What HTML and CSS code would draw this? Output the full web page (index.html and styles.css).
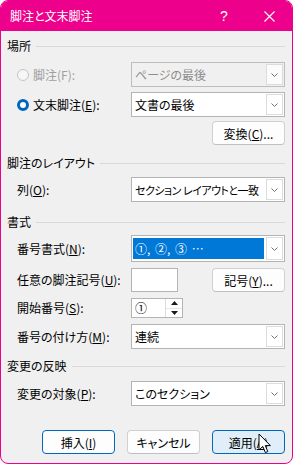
FILE: index.html
```html
<!DOCTYPE html>
<html lang="ja">
<head>
    <meta charset="UTF-8">
    <meta name="viewport" content="width=device-width, initial-scale=1.0">
    <title>脚注と文末脚注</title>
    <link rel="stylesheet" href="styles.css">
</head>
<body>
    <div class="window">
        <div class="titlebar">
            <span class="title">脚注と文末脚注</span>
            <span class="help">?</span>
            <span class="close">
                <svg width="11" height="11" viewBox="0 0 11 11"><path d="M0.5 0.5 L10.5 10.5 M10.5 0.5 L0.5 10.5" stroke="#fff" stroke-width="1.1" fill="none"/></svg>
            </span>
        </div>

        <div class="content">
            <!-- 場所 -->
            <div class="group-title g-place"><span>場所</span></div>
            <div class="row row-footnote">
                <label class="radio disabled"><span class="dot"></span><span>脚注(F):</span></label>
                <div class="select disabled">
                    <span class="value">ページの最後</span>
                    <span class="arrow"><svg width="7" height="4" viewBox="0 0 7 4"><path d="M0.5 0.5 L3.5 3.5 L6.5 0.5" stroke="#707070" fill="none"/></svg></span>
                </div>
            </div>
            <div class="row row-endnote">
                <label class="radio checked"><span class="dot"></span><span>文末脚注(<u>E</u>):</span></label>
                <div class="select">
                    <span class="value">文書の最後</span>
                    <span class="arrow"><svg width="7" height="4" viewBox="0 0 7 4"><path d="M0.5 0.5 L3.5 3.5 L6.5 0.5" stroke="#707070" fill="none"/></svg></span>
                </div>
            </div>
            <div class="row row-convert">
                <span></span>
                <button class="btn btn-right">変換(<u>C</u>)...</button>
            </div>

            <!-- 脚注のレイアウト -->
            <div class="group-title g-layout"><span>脚注のレイアウト</span></div>
            <div class="row row-columns">
                <label>列(<u>O</u>):</label>
                <div class="select">
                    <span class="value narrow">セクション レイアウトと一致</span>
                    <span class="arrow"><svg width="7" height="4" viewBox="0 0 7 4"><path d="M0.5 0.5 L3.5 3.5 L6.5 0.5" stroke="#707070" fill="none"/></svg></span>
                </div>
            </div>

            <!-- 書式 -->
            <div class="group-title g-format"><span>書式</span></div>
            <div class="row row-numformat">
                <label>番号書式(<u>N</u>):</label>
                <div class="select focused">
                    <span class="value">①, ②, ③ …</span>
                    <span class="arrow"><svg width="7" height="4" viewBox="0 0 7 4"><path d="M0.5 0.5 L3.5 3.5 L6.5 0.5" stroke="#707070" fill="none"/></svg></span>
                </div>
            </div>
            <div class="row row-custom">
                <label>任意の脚注記号(<u>U</u>):</label>
                <div class="split">
                    <div class="textbox"></div>
                    <button class="btn">記号(<u>Y</u>)...</button>
                </div>
            </div>
            <div class="row row-start">
                <label>開始番号(<u>S</u>):</label>
                <div class="spinner">
                    <span class="value">①</span>
                    <span class="spin">
                        <span class="spin-btn"><svg width="7" height="4" viewBox="0 0 7 4"><path d="M0 4 L3.5 0 L7 4 Z" fill="#1a1a1a"/></svg></span>
                        <span class="spin-btn"><svg width="7" height="4" viewBox="0 0 7 4"><path d="M0 0 L3.5 4 L7 0 Z" fill="#1a1a1a"/></svg></span>
                    </span>
                </div>
            </div>
            <div class="row row-numbering">
                <label>番号の付け方(<u>M</u>):</label>
                <div class="select">
                    <span class="value">連続</span>
                    <span class="arrow"><svg width="7" height="4" viewBox="0 0 7 4"><path d="M0.5 0.5 L3.5 3.5 L6.5 0.5" stroke="#707070" fill="none"/></svg></span>
                </div>
            </div>

            <!-- 変更の反映 -->
            <div class="group-title g-apply"><span>変更の反映</span></div>
            <div class="row row-target">
                <label>変更の対象(<u>P</u>):</label>
                <div class="select">
                    <span class="value">このセクション</span>
                    <span class="arrow"><svg width="7" height="4" viewBox="0 0 7 4"><path d="M0.5 0.5 L3.5 3.5 L6.5 0.5" stroke="#707070" fill="none"/></svg></span>
                </div>
            </div>

            <div class="footer">
                <button class="btn btn-default">挿入(<u>I</u>)</button>
                <button class="btn">キャンセル</button>
                <button class="btn btn-default btn-hover">適用(<u>A</u>)
                    <svg class="cursor" width="14" height="22" viewBox="0 0 14 22"><path d="M1 1 L1 17 L4.8 13.4 L7.4 19.6 L9.8 18.6 L7.3 12.6 L12.4 12.6 Z" fill="#fff" stroke="#000" stroke-width="1" stroke-linejoin="round"/></svg>
                </button>
            </div>
        </div>
    </div>
</body>
</html>
```

FILE: styles.css
```css
* {
    margin: 0;
    padding: 0;
    box-sizing: border-box;
}

body {
    font-family: "Noto Sans CJK JP", "Noto Sans", sans-serif;
    font-size: 12px;
    line-height: 16px;
    font-feature-settings: "palt";
    color: #000;
    background: #ffffff;
}

.window {
    width: 293px;
    height: 464px;
    border: 1px solid #ec008c;
    border-radius: 8px;
    background: #f0f0f0;
    overflow: hidden;
}

.titlebar {
    height: 30px;
    background: #ec008c;
    color: #fff;
    display: flex;
    align-items: center;
    padding-left: 9px;
}

.title {
    flex: 1;
    font-size: 12px;
}

.help {
    width: 16px;
    text-align: center;
    margin-right: 32px;
    font-family: "Liberation Sans", sans-serif;
    font-size: 14px;
}

.close {
    display: flex;
    margin-right: 17px;
}

.content {
    padding: 0 7px 0 6px;
}

/* group headings */
.group-title {
    display: flex;
    align-items: center;
    gap: 5px;
    height: 16px;
}

.group-title::after {
    content: "";
    flex: 1;
    height: 1px;
    background: #d9d9d9;
}

.g-place { margin-top: 7px; }
.g-layout { margin-top: 10px; }
.g-format { margin-top: 12px; }
.g-apply { margin-top: 9px; }

/* rows */
.row {
    display: grid;
    grid-template-columns: 114px 154px;
    align-items: center;
    padding-left: 10px;
}

.row-footnote { margin-top: 8px; }
.row-endnote { margin-top: 5px; }
.row-convert { margin-top: 4px; }
.row-columns { margin-top: 6px; }
.row-numformat { margin-top: 5px; }
.row-custom { margin-top: 6px; }
.row-start { margin-top: 6px; }
.row-numbering { margin-top: 6px; }
.row-target { margin-top: 7px; }

u {
    text-decoration: underline;
    text-underline-offset: 1px;
}

/* radio */
.radio {
    display: flex;
    align-items: center;
    gap: 4px;
}

.radio .dot {
    width: 12px;
    height: 12px;
    border-radius: 50%;
    border: 1px solid #c4c4c4;
    background: #f6f6f6;
}

.radio.disabled {
    color: #a0a0a0;
}

.radio.checked .dot {
    border: 3.5px solid #0067c0;
    background: #fff;
}

/* select */
.select {
    height: 25px;
    display: flex;
    border: 1px solid #b4b4b4;
    background: #fff;
}

.select .value {
    flex: 1;
    display: flex;
    align-items: center;
    padding-left: 3px;
    white-space: pre;
    overflow: hidden;
}

.select .value.narrow {
    font-size: 11px;
    letter-spacing: -0.5px;
}

.select.disabled {
    background: #f0f0f0;
    border-color: #bdbdbd;
}

.select.disabled .value {
    color: #8c8c8c;
}

.select .arrow {
    width: 17px;
    margin: 1px;
    border: 1px solid #dcdcdc;
    background: #fff;
    display: flex;
    align-items: center;
    justify-content: center;
}

.select.disabled .arrow {
    background: #fbfbfb;
}

.select.focused {
    height: 27px;
}

.select.focused .value {
    margin: 2px 1px 2px 1px;
    padding-left: 2px;
    background: #0078d7;
    color: #fff;
    word-spacing: 2px;
}

/* buttons */
.btn {
    width: 73px;
    height: 24px;
    font-family: inherit;
    font-size: 12px;
    font-feature-settings: "palt";
    color: #000;
    background: #fdfdfd;
    border: 1px solid #d0d0d0;
    border-bottom-color: #c0c0c0;
    border-radius: 4px;
}

.btn-right {
    justify-self: end;
}

.btn-default {
    border: 1px solid #0067c0;
}

.btn-hover {
    position: relative;
    background: #e0eef9;
}

.cursor {
    position: absolute;
    left: 45px;
    top: 2px;
}

.split {
    display: flex;
    justify-content: space-between;
    align-items: center;
}

.textbox {
    width: 47px;
    height: 24px;
    border: 1px solid #b4b4b4;
    background: #fff;
}

.spinner {
    width: 52px;
    height: 20px;
    display: flex;
    border: 1px solid #b4b4b4;
    background: #fff;
}

.spinner .value {
    flex: 1;
    padding-left: 3px;
    display: flex;
    align-items: center;
}

.spin {
    width: 17px;
    display: flex;
    flex-direction: column;
    border-left: 1px solid #dcdcdc;
}

.spin-btn {
    flex: 1;
    display: flex;
    align-items: center;
    justify-content: center;
}

.spin-btn + .spin-btn {
    border-top: 1px solid #e6e6e6;
}

.footer {
    display: flex;
    justify-content: flex-end;
    gap: 12px;
    margin-top: 24px;
}
```
